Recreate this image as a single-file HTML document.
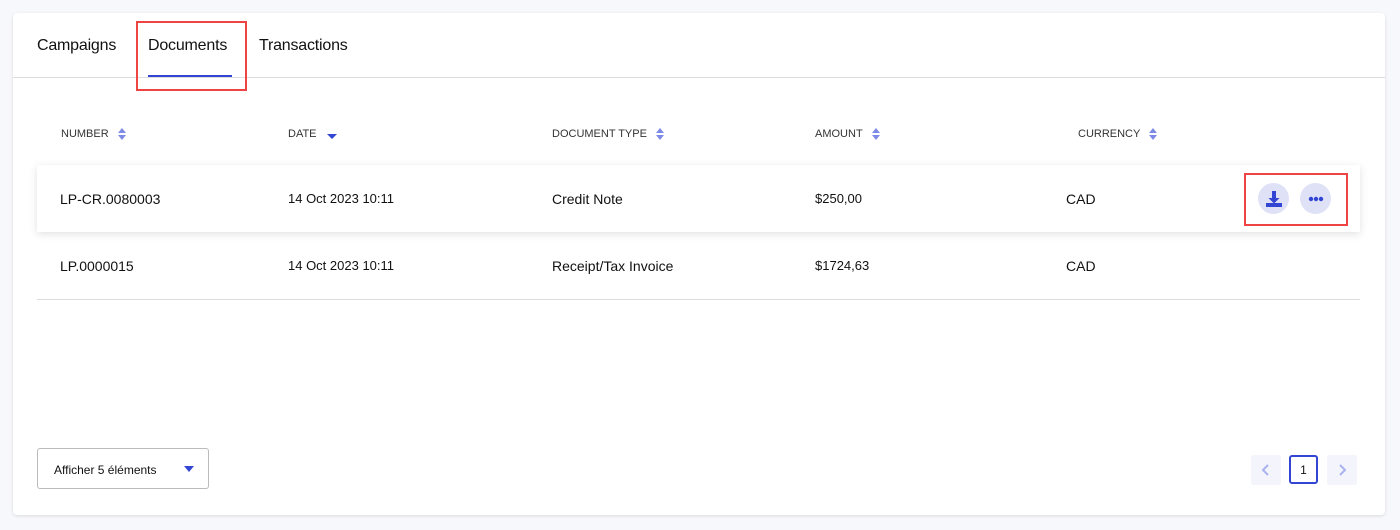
<!DOCTYPE html>
<html><head><style>
*{box-sizing:border-box;margin:0;padding:0}
body{width:1400px;height:530px;background:#f7f8fc;font-family:"Liberation Sans",sans-serif;color:#111;position:relative;overflow:hidden}
.card{position:absolute;left:13px;top:13px;width:1372px;height:502px;background:#fff;border-radius:4px;box-shadow:0 1px 3px rgba(0,0,0,.12)}
.tabs{position:absolute;left:0;top:0;width:100%;height:65px;border-bottom:1px solid #ddd}
.tab{position:absolute;top:24px;font-size:16px;color:#111;letter-spacing:-0.2px}
.ul{position:absolute;left:135px;top:62px;width:84px;height:2px;background:#3346d3}
.red{position:absolute;border:2px solid #ef4444}
.th{position:absolute;top:114px;font-size:11px;color:#333;display:flex;align-items:center;gap:8px}
.row{position:absolute;left:24px;width:1323px;height:67px}
.r1{top:152px;box-shadow:0 2px 8px rgba(0,0,0,.12)}
.r2{top:219px;border-bottom:1px solid #ddd;height:68px}
.c{position:absolute;top:26px;font-size:14px}
.btn{position:absolute;width:31px;height:31px;border-radius:50%;background:#dfe2f7;top:18px;display:flex;align-items:center;justify-content:center}
.sel{position:absolute;left:24px;top:435px;width:172px;height:41px;border:1px solid #bbb;border-radius:3px;font-size:12px;padding:14px 0 0 16px}
.pg{position:absolute;top:442px;width:30px;height:30px;border-radius:3px;background:#f3f4fc;display:flex;align-items:center;justify-content:center;font-size:12px}
</style></head><body>
<div class="card">
<div class="tabs">
<div class="tab" style="left:24px">Campaigns</div>
<div class="tab" style="left:135px">Documents</div>
<div class="tab" style="left:246px">Transactions</div>
<div class="ul"></div>
</div>
<div class="th" style="left:48px">NUMBER <svg width="10" height="14"><path d="M1 6L5 1L9 6Z M1 8L5 13L9 8Z" fill="#7d8ae6"/></svg></div>
<div class="th" style="left:275px">DATE <svg width="14" height="14"><path d="M2 7L7 12L12 7Z" fill="#3346d3"/></svg></div>
<div class="th" style="left:539px">DOCUMENT TYPE <svg width="10" height="14"><path d="M1 6L5 1L9 6Z M1 8L5 13L9 8Z" fill="#7d8ae6"/></svg></div>
<div class="th" style="left:802px">AMOUNT <svg width="10" height="14"><path d="M1 6L5 1L9 6Z M1 8L5 13L9 8Z" fill="#7d8ae6"/></svg></div>
<div class="th" style="left:1065px">CURRENCY <svg width="10" height="14"><path d="M1 6L5 1L9 6Z M1 8L5 13L9 8Z" fill="#7d8ae6"/></svg></div>
<div class="row r1">
<div class="c" style="left:23px">LP-CR.0080003</div>
<div class="c" style="left:251px;font-size:13px">14 Oct 2023 10:11</div>
<div class="c" style="left:515px">Credit Note</div>
<div class="c" style="left:778px;font-size:13px">$250,00</div>
<div class="c" style="left:1029px">CAD</div>
<div class="btn" style="left:1221px"><svg width="18" height="18"><path d="M7 1h4v7h3.5L9 13.5 3.5 8H7z M1 13h16v4H1z" fill="#3346d3"/></svg></div>
<div class="btn" style="left:1263px"><svg width="16" height="6"><circle cx="3" cy="3" r="2.2" fill="#3346d3"/><circle cx="8" cy="3" r="2.2" fill="#3346d3"/><circle cx="13" cy="3" r="2.2" fill="#3346d3"/></svg></div>
</div>
<div class="row r2">
<div class="c" style="left:23px">LP.0000015</div>
<div class="c" style="left:251px;font-size:13px">14 Oct 2023 10:11</div>
<div class="c" style="left:515px">Receipt/Tax Invoice</div>
<div class="c" style="left:778px;font-size:13px">$1724,63</div>
<div class="c" style="left:1029px">CAD</div>
</div>
<div class="sel">Afficher 5 éléments<svg style="position:absolute;left:146px;top:17px" width="10" height="6"><path d="M0 0h10L5 6z" fill="#3346d3"/></svg></div>
<div class="pg" style="left:1238px"><svg width="10" height="14"><path d="M7 2L2 7l5 5" stroke="#a9b2ef" stroke-width="2" fill="none"/></svg></div>
<div class="pg" style="left:1276px;background:#fff;border:2px solid #3346d3;width:29px;height:29px">1</div>
<div class="pg" style="left:1314px"><svg width="10" height="14"><path d="M3 2l5 5-5 5" stroke="#a9b2ef" stroke-width="2" fill="none"/></svg></div>
</div>
<div class="red" style="left:136px;top:21px;width:111px;height:70px"></div>
<div class="red" style="left:1244px;top:173px;width:104px;height:53px"></div>
</body></html>
